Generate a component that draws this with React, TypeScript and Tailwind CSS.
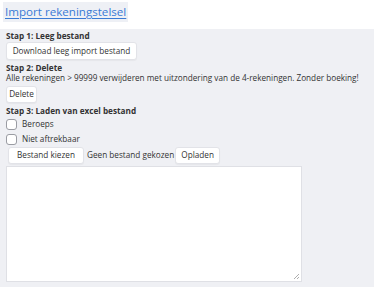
import React from "react";

export default function App() {
  const btn =
    "bg-white border border-[#e2e3e8] rounded-[3px] text-[#333] leading-none flex items-center justify-center whitespace-nowrap shadow-[0_1px_1px_rgba(0,0,0,0.04)]";
  return (
    <div className="w-[376px] h-[290px] bg-white text-[#333] font-['Open_Sans',sans-serif] text-[8.2px] overflow-hidden">
      <div className="pt-[2px] pl-[3px] h-[29px]">
        <div className="inline-block bg-[#eef0f5] px-[2px] h-[20px] leading-[20px]">
          <a href="#" className="text-[#3a7bd5] underline text-[11.6px] decoration-1 underline-offset-2">
            Import rekeningstelsel
          </a>
        </div>
      </div>
      <div className="bg-[#eff0f4] w-[374px] h-[258px] px-[6px] pt-[1px] flex flex-col items-start whitespace-nowrap">
        <div className="font-bold h-[11px] leading-[11px]">Stap 1: Leeg bestand</div>
        <div className="h-[1px]" />
        <button className={btn + " w-[131px] h-[18px] text-[8.2px]"}>Download leeg import bestand</button>
        <div className="h-[3px]" />
        <div className="font-bold h-[10px] leading-[10px]">Stap 2: Delete</div>
        <div className="h-[10px] leading-[10px]">
          Alle rekeningen &gt; 99999 verwijderen met uitzondering van de 4-rekeningen. Zonder boeking!
        </div>
        <div className="h-[3px]" />
        <button className={btn + " w-[31px] h-[17px] text-[8.2px]"}>Delete</button>
        <div className="h-[2px]" />
        <div className="font-bold h-[11px] leading-[11px]">Stap 3: Laden van excel bestand</div>
        <div className="h-[1px]" />
        <label className="flex items-center gap-[5px] h-[14px]">
          <span className="w-[11px] h-[11px] bg-white border border-[#9a9ca3] rounded-[3px]" />
          <span>Beroeps</span>
        </label>
        <div className="h-[1px]" />
        <label className="flex items-center gap-[5px] h-[14px]">
          <span className="w-[11px] h-[11px] bg-white border border-[#9a9ca3] rounded-[3px]" />
          <span>Niet aftrekbaar</span>
        </label>
        <div className="h-[1px]" />
        <div className="flex items-center pl-[2px] h-[17px]">
          <button className={btn + " w-[76px] h-[17px] text-[8.2px]"}>Bestand kiezen</button>
          <span className="ml-[3px] mr-[1px]">Geen bestand gekozen</span>
          <button className={btn + " w-[45px] h-[17px] text-[8.2px]"}>Opladen</button>
        </div>
        <div className="h-[2px]" />
        <div className="relative w-[296px] h-[116px] bg-white border border-[#dfe0e5]">
          <svg className="absolute right-[1px] bottom-[1px]" width="7" height="7" viewBox="0 0 7 7">
            <path d="M6 1 L1 6 M6 4 L4 6" stroke="#999" strokeWidth="0.8" />
          </svg>
        </div>
      </div>
    </div>
  );
}
